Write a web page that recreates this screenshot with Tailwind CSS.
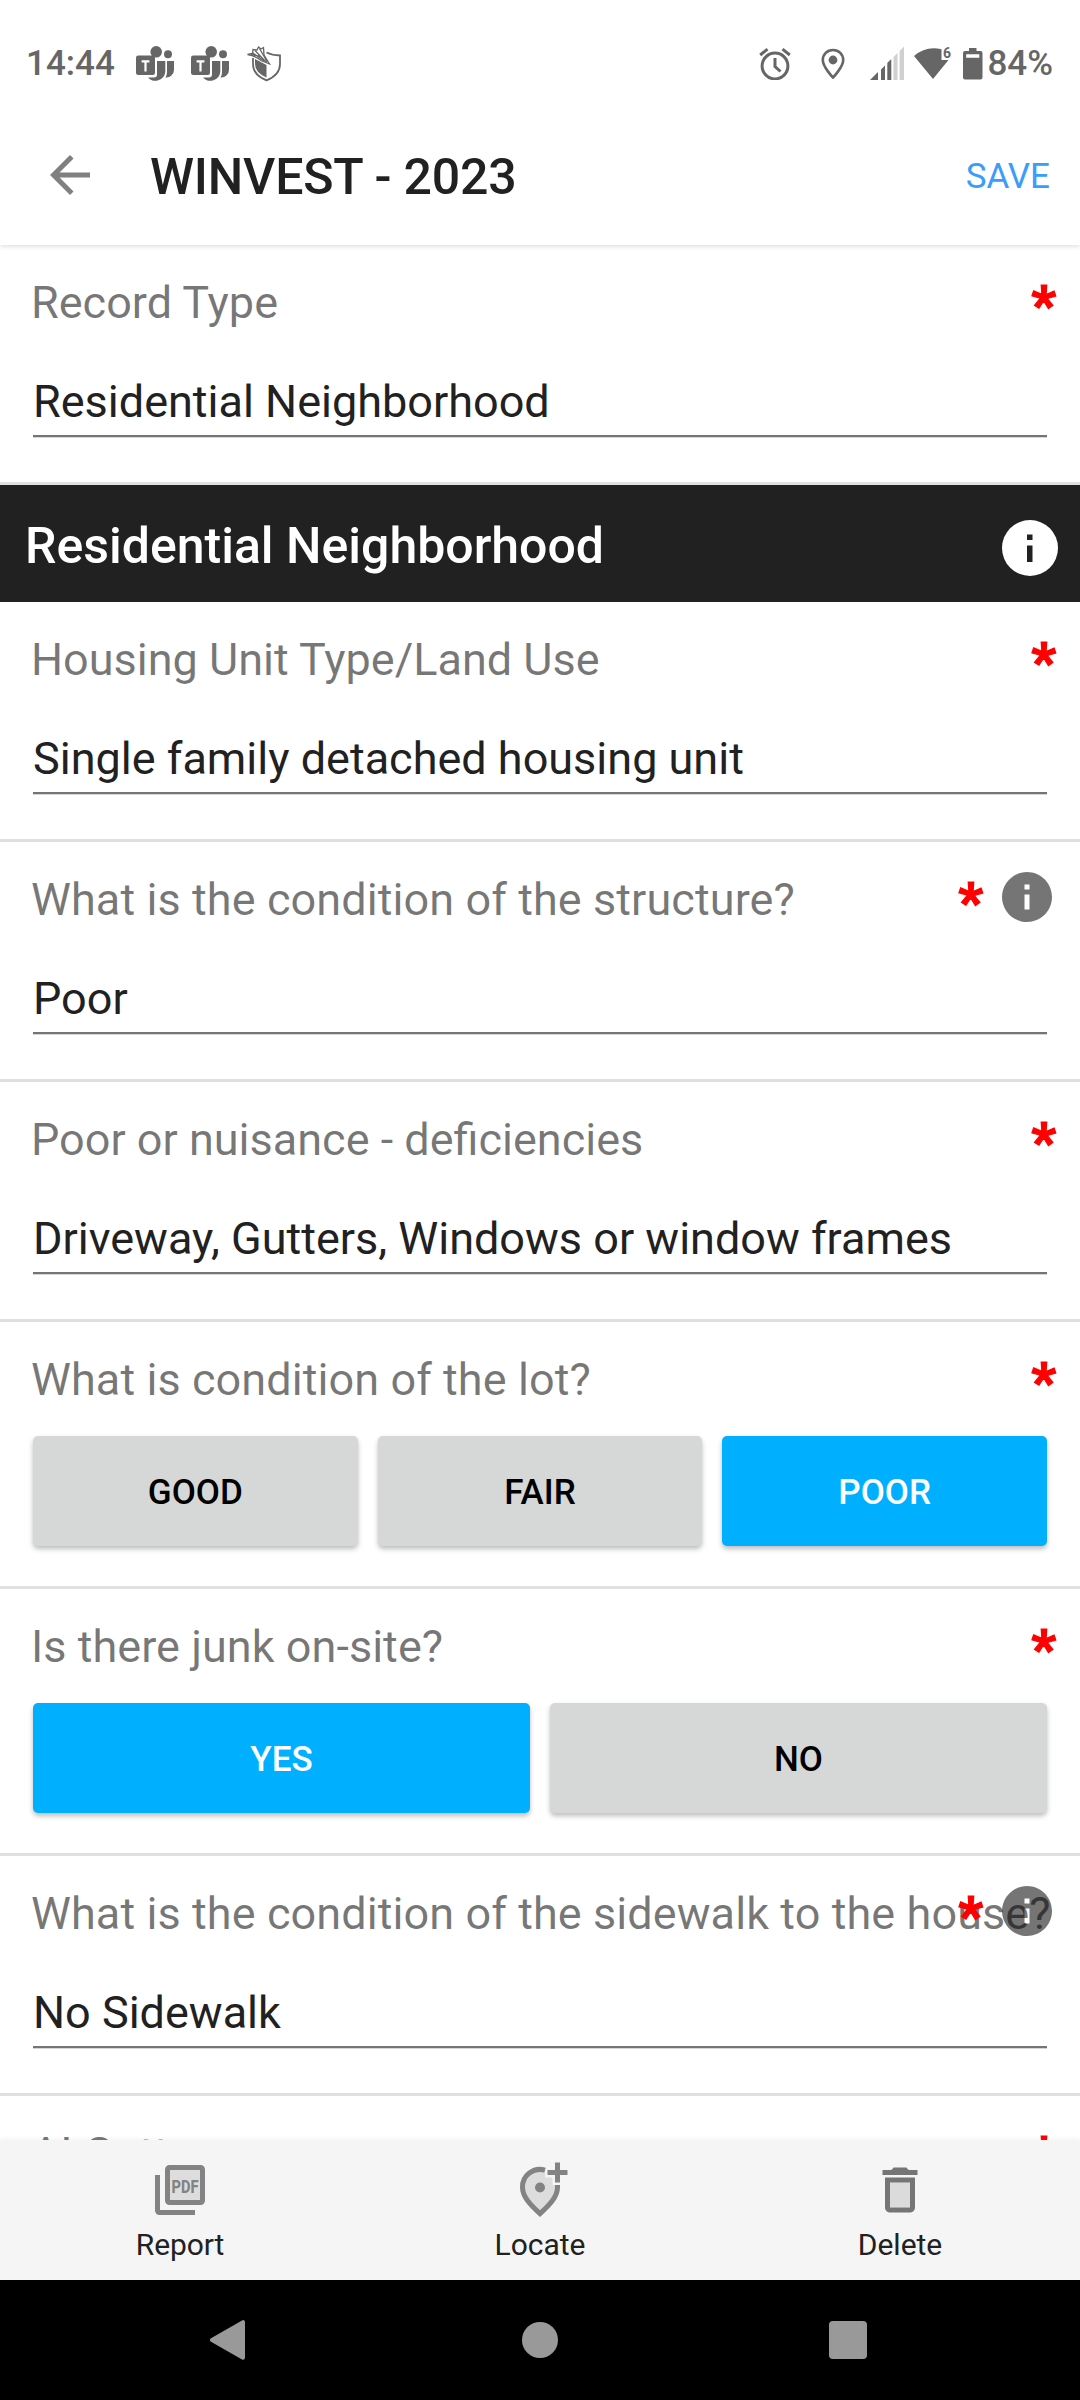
<!DOCTYPE html>
<html lang="en">
<head>
<meta charset="utf-8">
<title>WINVEST - 2023</title>
<script src="https://cdn.jsdelivr.net/npm/@tailwindcss/browser@4"></script>
</head>
<body class="bg-white">
<div class="flex h-[2400px] w-[1080px] flex-col overflow-hidden bg-white font-['Roboto',sans-serif] text-[#212121]">

  <!-- Status bar -->
  <div class="relative z-20 flex h-[125px] shrink-0 items-center justify-between bg-white pt-[2px] pr-[27px] pl-[26px] text-[#666]">
    <div class="flex items-center">
      <span class="w-[108px] text-[35px] leading-[40px] font-[480]">14:44</span>
      <svg class="ml-[2px]" width="38" height="36" viewBox="0 0 38 36" fill="#666">
        <circle cx="20.2" cy="5.8" r="5.8"/><circle cx="32" cy="8.2" r="4"/>
        <path d="M31 15h7v9a7.5 7.5 0 0 1-8.5 7.4Q31 29 31 26z"/>
        <path d="M21 15h8.3v11a10 10 0 0 1-17.3 5.5h6a3 3 0 0 0 3-3z"/>
        <rect x="0" y="9.5" width="19" height="19.5" rx="2.2"/>
        <path d="M5.6 14.2h7.8v2.2H10.6v9H8.4v-9H5.6z" fill="#fff"/>
      </svg>
      <svg class="ml-[17px]" width="38" height="36" viewBox="0 0 38 36" fill="#666">
        <circle cx="20.2" cy="5.8" r="5.8"/><circle cx="32" cy="8.2" r="4"/>
        <path d="M31 15h7v9a7.5 7.5 0 0 1-8.5 7.4Q31 29 31 26z"/>
        <path d="M21 15h8.3v11a10 10 0 0 1-17.3 5.5h6a3 3 0 0 0 3-3z"/>
        <rect x="0" y="9.5" width="19" height="19.5" rx="2.2"/>
        <path d="M5.6 14.2h7.8v2.2H10.6v9H8.4v-9H5.6z" fill="#fff"/>
      </svg>
      <svg class="ml-[18px]" width="34" height="36" viewBox="0 0 34 36" fill="none" stroke="#666">
        <path d="M19.5 6.5Q25 9.3 33 9.5V18Q33 29 19.5 34.3Q6 29 6 18V12" stroke-width="1.8"/>
        <path d="M8 13L19.5 19V31.5Q8 26.5 8 18z" fill="#666" stroke="none"/>
        <path d="M.5 8.5L5.5 7.5L6 3.5L10 4L11.5 1L14 3L16.5 1.5L17 9L22.5 18L14 14.5Q8 9.5 .5 8.5z" fill="#fff" stroke-width="1.3"/>
        <path d="M6 7L17 15M8 4.5L19.5 16.5M12.5 2.5L20 15.5M4 8.5L14 10.5" stroke-width="1.3"/>
      </svg>
    </div>
    <div class="flex items-center">
      <svg width="32" height="32" viewBox="0 0 32 32" fill="none" stroke="#666" stroke-width="3">
        <circle cx="16" cy="18" r="12.9"/><path d="M16 10v8.5l5.5 5M1.2 7L8.5 1.2M30.8 7L23.5 1.2"/>
      </svg>
      <svg class="ml-[30px]" width="24" height="32" viewBox="0 0 24 32">
        <path d="M12 2C6.2 2 1.8 6.5 1.8 12C1.8 19 12 29.5 12 29.5S22.2 19 22.2 12C22.2 6.5 17.8 2 12 2z" fill="none" stroke="#666" stroke-width="2.6"/>
        <circle cx="12" cy="12" r="4.4" fill="#666"/>
      </svg>
      <svg class="ml-[25px]" width="34" height="35" viewBox="0 0 34 35">
        <path d="M0 34L8 26V34zM11 23.5L15 19.5V34H11zM17.3 17L21.3 13V34H17.3z" fill="#666"/>
        <path d="M23.5 11L27.5 7V34H23.5zM29.6 5L34 .5V34H29.6z" fill="#d0d0d0"/>
      </svg>
      <svg class="ml-[10px] overflow-visible" width="38" height="34" viewBox="0 0 38 34">
        <path d="M0 9Q12 -1.5 27.5 2.2V13H34.5L19 32z" fill="#666"/>
        <text x="29" y="11.3" font-size="14" font-weight="700" fill="#666">6</text>
      </svg>
      <svg class="ml-[11px]" width="20" height="32" viewBox="0 0 20 32">
        <path d="M6 0h7.5v3H17.5a2 2 0 0 1 2 2V29.5a2 2 0 0 1-2 2H2a2 2 0 0 1-2-2V5a2 2 0 0 1 2-2H6zM3.2 6.3V9.7H16.3V6.3z" fill="#666" fill-rule="evenodd"/>
      </svg>
      <span class="ml-[4px] text-[35px] leading-[40px] font-[480]">84%</span>
    </div>
  </div>

  <!-- App bar -->
  <header class="relative z-10 flex h-[120px] shrink-0 items-center bg-white pr-[30px] pb-[18px] pl-[50px] shadow-[0_1px_5px_rgba(0,0,0,0.16)]">
    <svg class="-mt-[2px]" width="40" height="40" viewBox="4 4 16 16" fill="#808080"><path d="M20 11H7.830l5.590-5.590L12 4l-8 8 8 8 1.410-1.410L7.830 13H20v-2z"/></svg>
    <h1 class="mt-[2px] ml-[60px] text-[50px] leading-[60px] font-medium tracking-[-0.2px]">WINVEST - 2023</h1>
    <span class="mt-[1px] ml-auto text-[35px] leading-[40px] text-[#3b9dfb]">SAVE</span>
  </header>

  <!-- Form -->
  <main class="flex min-h-0 flex-1 flex-col overflow-hidden">
    <section class="relative h-[240px] shrink-0 border-b-[3px] border-[#e0e0e0] px-[33px] pt-[28px]">
      <div class="-ml-[2px] text-[45px] leading-[60px] whitespace-nowrap text-black/54">Record Type</div>
      <div class="mt-[39px] h-[65px] border-b-2 border-[#757575] text-[45px] leading-[60px] whitespace-nowrap shadow-[0_1px_0_#d6d6d6]">Residential Neighborhood</div>
      <span class="absolute top-[30px] right-[24px] text-[53px] leading-[60px] font-black text-[#f00] [-webkit-text-stroke:1.2px_#f00]">*</span>
    </section>

    <div class="flex h-[117px] shrink-0 items-center justify-between bg-[#212121] pr-[22px] pl-[25px] text-white">
      <h2 class="mt-[4px] text-[50px] leading-[60px] font-medium">Residential Neighborhood</h2>
      <svg class="mt-[9px]" width="56" height="56" viewBox="0 0 56 56"><circle cx="28" cy="28" r="28" fill="#fff"/><path d="M25 14.5h5.5V20H25zM25 25.5h5.5V42H25z" fill="#212121"/></svg>
    </div>

    <section class="relative h-[240px] shrink-0 border-b-[3px] border-[#e0e0e0] px-[33px] pt-[28px]">
      <div class="-ml-[2px] text-[45px] leading-[60px] whitespace-nowrap text-black/54">Housing Unit Type/Land Use</div>
      <div class="mt-[39px] h-[65px] border-b-2 border-[#757575] text-[45px] leading-[60px] whitespace-nowrap shadow-[0_1px_0_#d6d6d6]">Single family detached housing unit</div>
      <span class="absolute top-[30px] right-[24px] text-[53px] leading-[60px] font-black text-[#f00] [-webkit-text-stroke:1.2px_#f00]">*</span>
    </section>

    <section class="relative h-[240px] shrink-0 border-b-[3px] border-[#e0e0e0] px-[33px] pt-[28px]">
      <div class="-ml-[2px] text-[45px] leading-[60px] tracking-[0.08px] whitespace-nowrap text-black/54">What is the condition of the structure?</div>
      <div class="mt-[39px] h-[65px] border-b-2 border-[#757575] text-[45px] leading-[60px] whitespace-nowrap shadow-[0_1px_0_#d6d6d6]">Poor</div>
      <span class="absolute top-[30px] right-[97px] text-[53px] leading-[60px] font-black text-[#f00] [-webkit-text-stroke:1.2px_#f00]">*</span>
      <svg class="absolute top-[30px] right-[28px]" width="50" height="50" viewBox="2 2 20 20" fill="#000" fill-opacity=".54"><path d="M12 2C6.480 2 2 6.480 2 12s4.480 10 10 10 10-4.480 10-10S17.520 2 12 2zm1 15h-2v-6h2v6zm0-8h-2V7h2v2z"/></svg>
    </section>

    <section class="relative h-[240px] shrink-0 border-b-[3px] border-[#e0e0e0] px-[33px] pt-[28px]">
      <div class="-ml-[2px] text-[45px] leading-[60px] whitespace-nowrap text-black/54">Poor or nuisance - deficiencies</div>
      <div class="mt-[39px] h-[65px] border-b-2 border-[#757575] text-[45px] leading-[60px] whitespace-nowrap shadow-[0_1px_0_#d6d6d6]">Driveway, Gutters, Windows or window frames</div>
      <span class="absolute top-[30px] right-[24px] text-[53px] leading-[60px] font-black text-[#f00] [-webkit-text-stroke:1.2px_#f00]">*</span>
    </section>

    <section class="relative h-[267px] shrink-0 border-b-[3px] border-[#e0e0e0] px-[33px] pt-[28px]">
      <div class="-ml-[2px] text-[45px] leading-[60px] tracking-[0.07px] whitespace-nowrap text-black/54">What is condition of the lot?</div>
      <div class="mt-[26px] grid h-[110px] grid-cols-3 gap-[20px] text-[35px] leading-[40px]">
        <button class="rounded-[5px] bg-[#d6d8d7] pt-[3px] font-medium text-black shadow-[0_3px_5px_rgba(0,0,0,0.26)]">GOOD</button>
        <button class="rounded-[5px] bg-[#d6d8d7] pt-[3px] font-medium text-black shadow-[0_3px_5px_rgba(0,0,0,0.26)]">FAIR</button>
        <button class="rounded-[5px] bg-[#00b0ff] pt-[3px] font-medium text-white shadow-[0_3px_5px_rgba(0,0,0,0.26)]">POOR</button>
      </div>
      <span class="absolute top-[30px] right-[24px] text-[53px] leading-[60px] font-black text-[#f00] [-webkit-text-stroke:1.2px_#f00]">*</span>
    </section>

    <section class="relative h-[267px] shrink-0 border-b-[3px] border-[#e0e0e0] px-[33px] pt-[28px]">
      <div class="-ml-[2px] text-[45px] leading-[60px] tracking-[0.04px] whitespace-nowrap text-black/54">Is there junk on-site?</div>
      <div class="mt-[26px] grid h-[110px] grid-cols-2 gap-[20px] text-[35px] leading-[40px]">
        <button class="rounded-[5px] bg-[#00b0ff] pt-[3px] font-medium text-white shadow-[0_3px_5px_rgba(0,0,0,0.26)]">YES</button>
        <button class="rounded-[5px] bg-[#d6d8d7] pt-[3px] font-medium text-black shadow-[0_3px_5px_rgba(0,0,0,0.26)]">NO</button>
      </div>
      <span class="absolute top-[30px] right-[24px] text-[53px] leading-[60px] font-black text-[#f00] [-webkit-text-stroke:1.2px_#f00]">*</span>
    </section>

    <section class="relative h-[240px] shrink-0 border-b-[3px] border-[#e0e0e0] px-[33px] pt-[28px]">
      <div class="-ml-[2px] text-[45px] leading-[60px] tracking-[0.08px] whitespace-nowrap text-black/54">What is the condition of the sidewalk to the house?</div>
      <div class="mt-[39px] h-[65px] border-b-2 border-[#757575] text-[45px] leading-[60px] whitespace-nowrap shadow-[0_1px_0_#d6d6d6]">No Sidewalk</div>
      <span class="absolute top-[30px] right-[97px] text-[53px] leading-[60px] font-black text-[#f00] [-webkit-text-stroke:1.2px_#f00]">*</span>
      <svg class="absolute top-[30px] right-[28px]" width="50" height="50" viewBox="2 2 20 20" fill="#000" fill-opacity=".54"><path d="M12 2C6.480 2 2 6.480 2 12s4.480 10 10 10 10-4.480 10-10S17.520 2 12 2zm1 15h-2v-6h2v6zm0-8h-2V7h2v2z"/></svg>
    </section>

    <section class="relative h-[44px] shrink-0 overflow-hidden px-[33px] pt-[28px]">
      <div class="-ml-[2px] text-[45px] leading-[60px] whitespace-nowrap text-black/54">AI Gutters</div>
      <span class="absolute top-[30px] right-[24px] text-[53px] leading-[60px] font-black text-[#f00] [-webkit-text-stroke:1.2px_#f00]">*</span>
    </section>
  </main>

  <!-- Bottom actions -->
  <nav class="grid h-[140px] shrink-0 grid-cols-3 bg-[#f5f5f5] pt-[20px] text-[30px] leading-[40px] shadow-[0_-1px_4px_rgba(0,0,0,0.05)]">
    <div class="flex flex-col items-center gap-[5px]">
      <svg width="60" height="60" viewBox="0 0 60 60">
        <rect x="17.5" y="7.5" width="35" height="35" rx="2" fill="#ddd" stroke="#838383" stroke-width="5"/>
        <path d="M7.5 15V50.5a2 2 0 0 0 2 2H45" fill="none" stroke="#838383" stroke-width="5"/>
        <text x="21.5" y="32.5" font-size="18" font-weight="800" fill="#838383" textLength="27" lengthAdjust="spacingAndGlyphs">PDF</text>
      </svg>
      <span class="tracking-[-0.1px]">Report</span>
    </div>
    <div class="flex flex-col items-center gap-[5px]">
      <svg width="60" height="60" viewBox="0 0 60 60">
        <path d="M35 10.5A17.5 17.5 0 0 0 12.5 27.5C12.5 37 21 46 30 54C39 46 47.5 37 47.5 27.5V25H42.5V17.5H35z" fill="#ddd"/>
        <path d="M35 10.2A17.5 17.5 0 0 0 12.5 27.5C12.5 37 21 45.5 30 53.7C39 45.5 47.5 37 47.5 27.5V25" fill="none" stroke="#838383" stroke-width="5"/>
        <circle cx="30" cy="27.5" r="5" fill="#838383"/>
        <path d="M45 2.5h5V10h7.5v5H50v7.5H45V15H37.5V10H45z" fill="#838383"/>
      </svg>
      <span>Locate</span>
    </div>
    <div class="flex flex-col items-center gap-[5px]">
      <svg width="60" height="60" viewBox="0 0 24 24"><path d="M8 9h8v10H8z" fill="#dbdbdb"/><path d="M15.5 4l-1-1h-5l-1 1H5v2h14V4zM6 19c0 1.100.9 2 2 2h8c1.100 0 2-.9 2-2V7H6v12zM8 9h8v10H8V9z" fill="#757575"/></svg>
      <span>Delete</span>
    </div>
  </nav>

  <!-- System navigation -->
  <div class="flex h-[120px] shrink-0 items-center bg-black pl-[210px]">
    <svg width="35" height="40" viewBox="0 0 35 40"><path d="M2 20L33 2.2V37.8z" fill="#999" stroke="#999" stroke-width="4" stroke-linejoin="round"/></svg>
    <div class="ml-[277px] size-[36px] rounded-full bg-[#999]"></div>
    <div class="ml-[271px] size-[38px] rounded-[4px] bg-[#999]"></div>
  </div>
</div>
</body>
</html>
